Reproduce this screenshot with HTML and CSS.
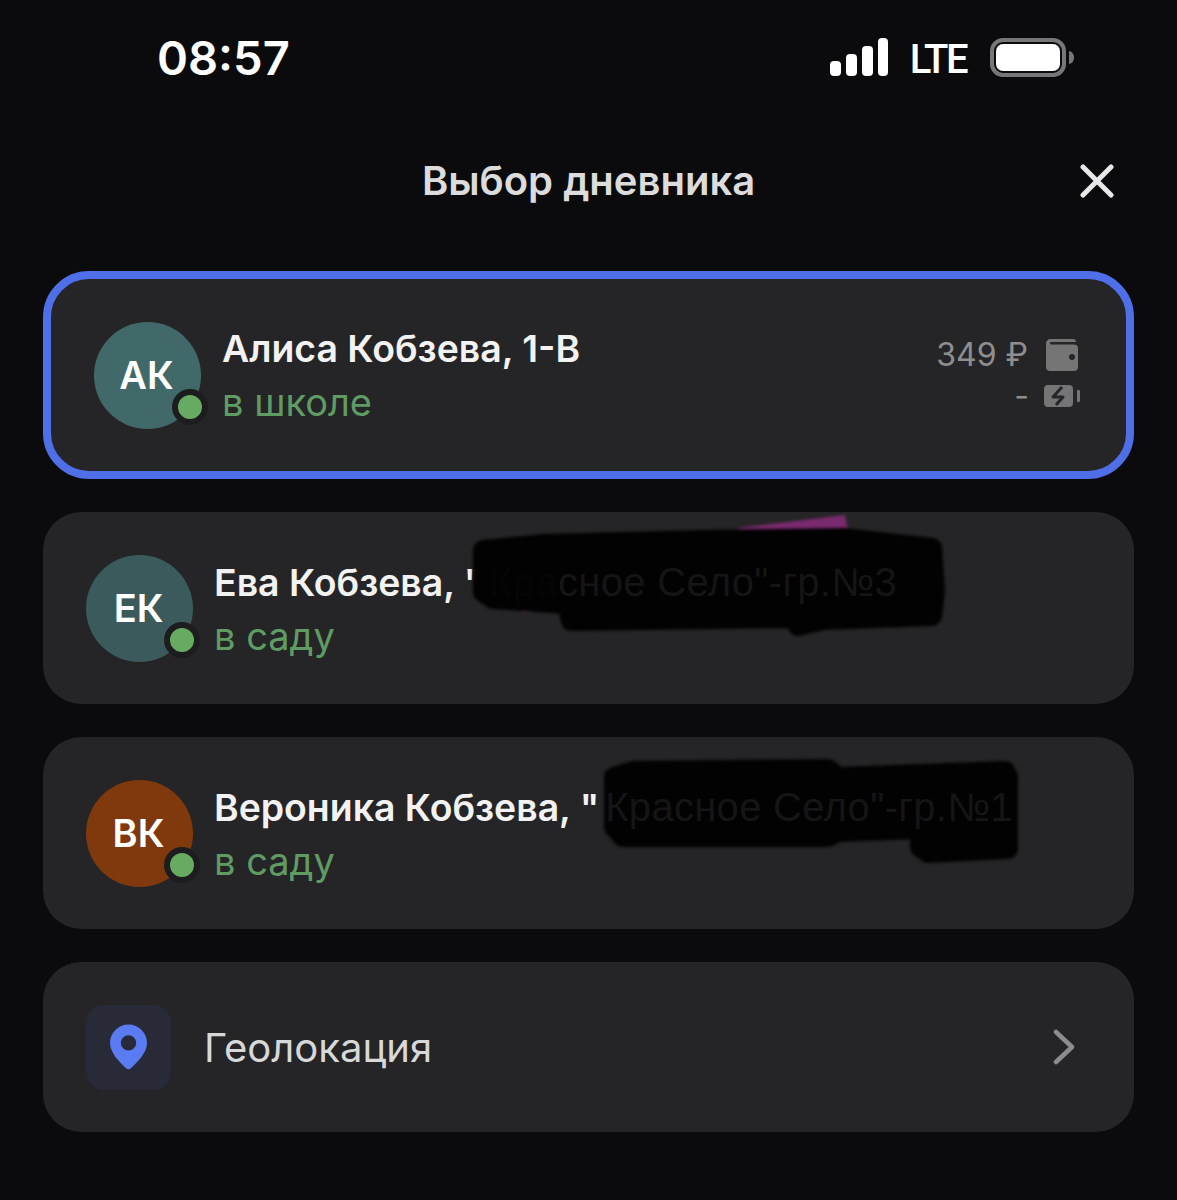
FILE: index.html
```html
<!DOCTYPE html>
<html lang="ru">

<head>
    <meta charset="UTF-8">
    <meta name="viewport" content="width=device-width, initial-scale=1.0">
    <title>Выбор дневника</title>
    <link rel="stylesheet" href="styles.css">
</head>

<body>
    <div class="status-bar">
        <span class="time">08:57</span>
        <div class="status-icons">
            <svg class="signal" width="58" height="38" viewBox="0 0 58 38">
                <rect x="0" y="23" width="11" height="15" rx="4" />
                <rect x="16" y="16" width="11" height="22" rx="4" />
                <rect x="32" y="8" width="11" height="30" rx="4" />
                <rect x="48" y="0" width="10" height="38" rx="4" />
            </svg>
            <span class="network">LTE</span>
            <svg class="battery" width="84" height="39" viewBox="0 0 84 39">
                <rect x="2" y="2" width="72" height="35" rx="11" fill="none" stroke="#77777a" stroke-width="4" />
                <rect x="6" y="6" width="64" height="27" rx="7" fill="#ffffff" />
                <path d="M79 13c3 0.5 5 3 5 6.500s-2 6-5 6.500z" fill="#77777a" />
            </svg>
        </div>
    </div>

    <header class="header">
        <h1>Выбор дневника</h1>
        <svg class="close" width="34" height="34" viewBox="0 0 34 34">
            <path d="M3 3L31 31M31 3L3 31" fill="none" stroke="#e8e8e8" stroke-width="5" stroke-linecap="round" />
        </svg>
    </header>

    <main class="list">
        <div class="card card-selected">
            <div class="avatar avatar-teal">АК<span class="dot"></span></div>
            <div class="info">
                <div class="name">Алиса Кобзева, 1-В</div>
                <div class="place">в школе</div>
            </div>
            <div class="meta">
                <div class="meta-row">
                    <span>349 ₽</span>
                    <svg width="32" height="32" viewBox="0 0 32 32">
                        <path d="M5 0H27C29 0 30 1 30 3H5C3.500 3 3.500 5.500 5 5.500H28C30.500 5.500 32 7 32 9V28C32 30.500 30.500 32 28 32H4C1.500 32 0 30.500 0 28V5C0 2 2 0 5 0Z" fill="#757575" />
                        <circle cx="26" cy="18" r="3" fill="#262628" />
                    </svg>
                </div>
                <div class="meta-row meta-row-small">
                    <span>-</span>
                    <svg width="36" height="22" viewBox="0 0 36 22">
                        <rect x="0" y="0" width="29" height="22" rx="4" fill="#757575" />
                        <path d="M18 2L9 12H19L12 20" fill="none" stroke="#262628" stroke-width="3" stroke-linejoin="round" />
                        <rect x="33" y="5" width="3" height="12" rx="1" fill="#757575" />
                    </svg>
                </div>
            </div>
        </div>

        <div class="card">
            <div class="avatar avatar-teal-dark">ЕК<span class="dot"></span></div>
            <div class="info">
                <div class="name">Ева Кобзева, "<span class="name-hidden"><span class="name-covered">Кра</span>сное Село"-гр.№3</span></div>
                <div class="place">в саду</div>
            </div>
            <!-- закрашенная часть названия -->
            <svg class="scribble" viewBox="0 0 1091 192">
                <path d="M695 16L802 3L806 24L695 28Z" fill="#7a2a6e" />
                <path d="M470 92L500 88L500 100L480 100Z" fill="#7a2a6e" />
                <path d="M440 38L500 32L660 28L800 26L889 36L892 78L889 104L780 108L755 114L750 106L600 108L528 109L524 92L450 87L440 80Z" fill="#020203" stroke="#020203" stroke-width="20" stroke-linejoin="round" />
            </svg>
        </div>

        <div class="card">
            <div class="avatar avatar-brown">ВК<span class="dot"></span></div>
            <div class="info">
                <div class="name">Вероника Кобзева, "<span class="name-hidden">Красное Село"-гр.№1</span></div>
                <div class="place">в саду</div>
            </div>
            <svg class="scribble" viewBox="0 0 1091 192">
                <path d="M571 40L590 34L785 32L795 40L962 34L965 40L965 112L885 116L877 110L877 92L795 95L785 100L600 100L580 100L571 90Z" fill="#020203" stroke="#020203" stroke-width="20" stroke-linejoin="round" />
            </svg>
        </div>

        <div class="card card-geo">
            <div class="geo-icon">
                <svg width="37" height="46" viewBox="0 0 36 44">
                    <path fill-rule="evenodd" d="M18 0C28 0 36 8 36 18C36 28 26 37 20 43C19 44 17 44 16 43C10 37 0 28 0 18C0 8 8 0 18 0ZM18 10.500A7.500 7.500 0 1 0 18 25.500A7.500 7.500 0 1 0 18 10.500Z" fill="#5a7bf2" />
                </svg>
            </div>
            <span class="geo-title">Геолокация</span>
            <svg class="chevron" width="22" height="36" viewBox="0 0 22 36">
                <path d="M3 3L19 18L3 33" fill="none" stroke="#8c8c8e" stroke-width="4.500" stroke-linecap="round" stroke-linejoin="round" />
            </svg>
        </div>
    </main>
</body>

</html>
```

FILE: styles.css
```css
body {
    margin: 0;
    height: 1200px;
    background-color: #0b0b0d;
    font-family: 'Inter', 'Liberation Sans', sans-serif;
    color: #ffffff;
    overflow: hidden;
}

.status-bar {
    height: 114px;
    display: flex;
    align-items: center;
    justify-content: space-between;
    padding: 0 103px 0 157px;
}

.time {
    font-size: 47px;
    font-weight: 600;
}

.status-icons {
    display: flex;
    align-items: center;
}

.signal {
    fill: #ffffff;
}

.network {
    margin-left: 22px;
    margin-right: 24px;
    font-family: 'Roboto', sans-serif;
    font-size: 40px;
    font-weight: 500;
    letter-spacing: -2.500px;
    position: relative;
    top: 2px;
}

.header {
    height: 132px;
    display: flex;
    align-items: center;
    justify-content: center;
    position: relative;
}

.header h1 {
    margin: 0;
    font-size: 40px;
    font-weight: 600;
    color: #dcdcdc;
}

.close {
    position: absolute;
    right: 63px;
    top: 50px;
}

.list {
    margin: 25px 43px 0;
    display: flex;
    flex-direction: column;
    gap: 33px;
}

.card {
    position: relative;
    height: 192px;
    box-sizing: border-box;
    padding-left: 43px;
    display: flex;
    align-items: center;
    background-color: #252527;
    border-radius: 38px;
    overflow: hidden;
}

.card-selected {
    height: 208px;
    border: 8px solid #4f6fe8;
    border-radius: 46px;
}

.card-geo {
    height: 170px;
}

.avatar {
    position: relative;
    flex-shrink: 0;
    width: 107px;
    height: 107px;
    border-radius: 50%;
    display: flex;
    justify-content: center;
    align-items: center;
    padding-right: 2px;
    box-sizing: border-box;
    font-size: 38px;
    font-weight: 600;
}

.avatar-teal {
    background-color: #42696a;
}

.avatar-teal-dark {
    background-color: #3a5a5b;
}

.avatar-brown {
    background-color: #80390c;
}

.dot {
    position: absolute;
    right: -7px;
    bottom: 4px;
    width: 24px;
    height: 24px;
    background-color: #67ab63;
    border: 6px solid #1d1d1f;
    border-radius: 50%;
}

.info {
    margin-left: 21px;
    padding-top: 1px;
    display: flex;
    flex-direction: column;
    gap: 9px;
    white-space: nowrap;
}

.name {
    font-size: 37.400px;
    line-height: 44px;
    font-weight: 600;
    color: #f2f2f2;
}

.name-hidden {
    position: relative;
    z-index: 2;
    margin-left: 6px;
    color: #151516;
    font-family: 'Liberation Sans', sans-serif;
    font-size: 40px;
    font-weight: 400;
    letter-spacing: 0.3px;
}

.name-covered {
    color: #050506;
}

.place {
    font-size: 38px;
    line-height: 44px;
    color: #5f9c63;
}

.scribble {
    position: absolute;
    top: 0;
    left: 0;
    width: 1091px;
    height: 192px;
    z-index: 1;
    filter: blur(1.5px);
}

.meta {
    margin-left: auto;
    padding-right: 48px;
    padding-bottom: 7px;
    display: flex;
    flex-direction: column;
    align-items: flex-end;
    gap: 10px;
    color: #8e8e8e;
    font-size: 32px;
}

.meta-row {
    display: flex;
    align-items: center;
    gap: 18px;
}

.meta-row-small {
    margin-right: -2px;
    gap: 15px;
    line-height: 24px;
}

.geo-icon {
    width: 85px;
    height: 85px;
    flex-shrink: 0;
    background-color: #282a38;
    border-radius: 18px;
    display: flex;
    justify-content: center;
    align-items: center;
}

.geo-title {
    margin-left: 33px;
    font-size: 40px;
    color: #d8d8d8;
}

.chevron {
    margin-left: auto;
    margin-right: 59px;
}
```
